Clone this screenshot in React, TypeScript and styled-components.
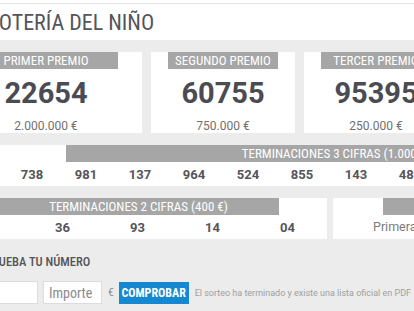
import React from "react";
import styled, { createGlobalStyle } from "styled-components";

const CONDENSED = `"Roboto Condensed", "Liberation Sans Narrow", "DejaVu Sans Condensed", sans-serif`;

const GlobalStyle = createGlobalStyle`
  body {
    margin: 0;
    background: #ececec;
    font-family: Roboto, "Liberation Sans", sans-serif;
    overflow: hidden;
  }
`;

type Prize = { label: string; number: string; amount: string; width: number; labelWidth: number };

const prizes: Prize[] = [
  { label: "Primer premio", number: "22654", amount: "2.000.000 €", width: 192, labelWidth: 144 },
  { label: "Segundo premio", number: "60755", amount: "750.000 €", width: 144, labelWidth: 110 },
  { label: "Tercer premio", number: "95395", amount: "250.000 €", width: 144, labelWidth: 110 },
];

const threeDigits = ["738", "981", "137", "964", "524", "855", "143", "487"];
const twoDigits = ["36", "93", "14", "04"];

export default function App() {
  return (
    <Page>
      <GlobalStyle />
      <Header>
        <HeaderInner>
          <Title>Lotería del Niño</Title>
        </HeaderInner>
      </Header>
      <Content>
        <PrizeRow>
          {prizes.map((p) => (
            <PrizeCard key={p.label} $width={p.width}>
              <PrizeLabel $width={p.labelWidth}>{p.label}</PrizeLabel>
              <PrizeNumber>{p.number}</PrizeNumber>
              <Divider />
              <Amount>{p.amount}</Amount>
            </PrizeCard>
          ))}
        </PrizeRow>

        <WideCard>
          <SectionBar $offset={116} $width={540}>
            Terminaciones 3 cifras (1.000 €)
          </SectionBar>
          <NumberRow $pad={55}>
            {threeDigits.map((n) => (
              <NumberCell key={n} $width={54}>
                {n}
              </NumberCell>
            ))}
          </NumberRow>
        </WideCard>

        <BottomRow>
          <Card $width={377}>
            <SectionBar $offset={48} $width={281}>
              Terminaciones 2 cifras (400 €)
            </SectionBar>
            <NumberRow $pad={75}>
              {twoDigits.map((n) => (
                <NumberCell key={n} $width={75}>
                  {n}
                </NumberCell>
              ))}
            </NumberRow>
          </Card>
          <Card $width={200}>
            <SectionBar $offset={50} $width={150} />
            <PlainText>Primera</PlainText>
          </Card>
        </BottomRow>

        <CheckTitle>Prueba tu número</CheckTitle>
        <FormRow>
          <Field $width={80} />
          <Field $width={59} placeholder="Importe" />
          <Euro>€</Euro>
          <CheckButton>Comprobar</CheckButton>
          <Note>El sorteo ha terminado y existe una lista oficial en PDF</Note>
        </FormRow>
      </Content>
    </Page>
  );
}

const Page = styled.div`
  width: 414px;
  height: 311px;
  overflow: hidden;
  background: #ececec;
`;

const Header = styled.div`
  background: #fff;
  height: 40px;
  padding-top: 3px;
  box-sizing: border-box;
`;

const HeaderInner = styled.div`
  height: 37px;
  border-top: 1px solid #e2e2e2;
  display: flex;
  align-items: center;
  overflow: hidden;
`;

const Title = styled.h1`
  margin: 0 0 0 -11px;
  font-family: ${CONDENSED};
  font-weight: 400;
  font-size: 22px;
  color: #555559;
  text-transform: uppercase;
  white-space: nowrap;
`;

const Content = styled.div`
  margin-left: -50px;
  width: 720px;
  padding-top: 12px;
`;

const PrizeRow = styled.div`
  display: flex;
  gap: 9px;
  align-items: flex-start;
`;

const PrizeCard = styled.div<{ $width: number }>`
  width: ${(p) => p.$width}px;
  height: 81px;
  background: #fff;
  display: flex;
  flex-direction: column;
  align-items: center;
`;

const PrizeLabel = styled.div<{ $width: number }>`
  width: ${(p) => p.$width}px;
  height: 17px;
  line-height: 17px;
  background: #a6a6a6;
  color: #fff;
  font-family: ${CONDENSED};
  font-size: 13px;
  text-transform: uppercase;
  text-align: center;
  white-space: nowrap;
`;

const PrizeNumber = styled.div`
  margin-top: 7px;
  height: 34px;
  line-height: 34px;
  font-size: 29px;
  font-weight: 700;
  color: #4b4b53;
`;

const Divider = styled.div`
  margin-top: 6px;
  width: calc(100% - 10px);
  height: 1px;
  background: #e6e6e6;
`;

const Amount = styled.div`
  margin-top: 3px;
  font-size: 12px;
  line-height: 14px;
  color: #707070;
`;

const WideCard = styled.div`
  margin-top: 12px;
  background: #fff;
`;

const SectionBar = styled.div<{ $offset: number; $width: number }>`
  margin-left: ${(p) => p.$offset}px;
  width: ${(p) => p.$width}px;
  height: 17px;
  line-height: 17px;
  background: #a6a6a6;
  color: #fff;
  font-family: ${CONDENSED};
  font-size: 13px;
  text-transform: uppercase;
  text-align: center;
  white-space: nowrap;
`;

const NumberRow = styled.div<{ $pad: number }>`
  display: flex;
  padding-left: ${(p) => p.$pad}px;
  height: 24px;
  align-items: center;
`;

const NumberCell = styled.div<{ $width: number }>`
  width: ${(p) => p.$width}px;
  text-align: center;
  font-size: 13px;
  font-weight: 700;
  color: #55555b;
`;

const BottomRow = styled.div`
  margin-top: 12px;
  display: flex;
  gap: 6px;
`;

const Card = styled.div<{ $width: number }>`
  width: ${(p) => p.$width}px;
  height: 41px;
  background: #fff;
`;

const PlainText = styled.div`
  padding-left: 40px;
  height: 24px;
  line-height: 24px;
  font-size: 12.5px;
  color: #7a7a7a;
`;

const CheckTitle = styled.div`
  margin: 16px 0 0 35px;
  line-height: 14px;
  font-family: ${CONDENSED};
  font-size: 12.5px;
  font-weight: 500;
  color: #555559;
  text-transform: uppercase;
`;

const FormRow = styled.div`
  margin-top: 12px;
  display: flex;
  align-items: center;
  padding-left: 8px;
  gap: 5px;
`;

const Field = styled.input<{ $width: number }>`
  width: ${(p) => p.$width}px;
  height: 23px;
  box-sizing: border-box;
  border: 1px solid #dcdcdc;
  background: #fff;
  padding: 0 5px;
  font-family: ${CONDENSED};
  font-size: 14px;
  color: #555;
  outline: none;
  &::placeholder {
    color: #8a8a8a;
  }
`;

const Euro = styled.span`
  margin-left: 1px;
  font-size: 10px;
  color: #888;
`;

const CheckButton = styled.button`
  width: 70px;
  height: 22px;
  border: 0;
  padding: 0;
  background: #1688d2;
  color: #fff;
  font-family: ${CONDENSED};
  font-weight: 700;
  font-size: 12px;
  text-transform: uppercase;
`;

const Note = styled.span`
  margin-left: 1px;
  font-size: 9px;
  color: #a0a0a0;
  white-space: nowrap;
`;
